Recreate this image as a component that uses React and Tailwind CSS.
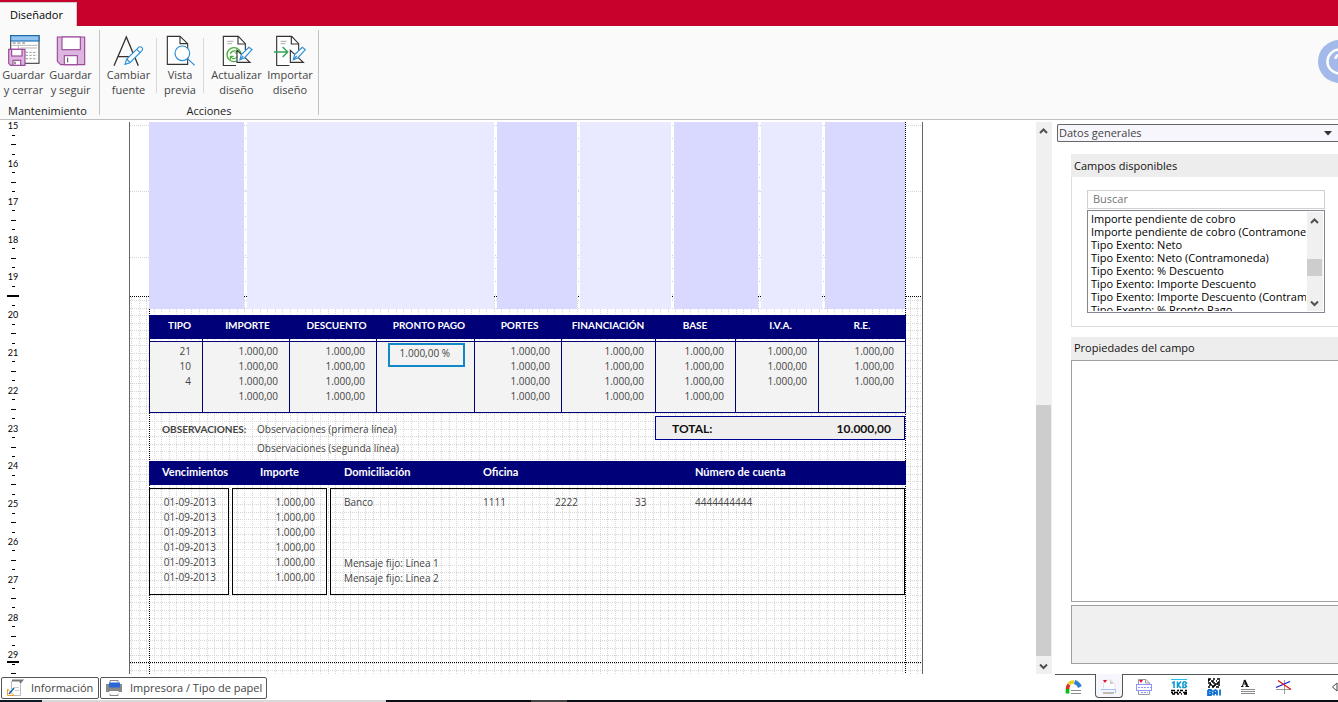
import React from "react";

const UI = "font-['Open_Sans','Noto_Sans',sans-serif]";
const DOC = "font-['Lato','Open_Sans',sans-serif]";
const DOC_BODY = "font-['Open_Sans','Noto_Sans',sans-serif]";

/* ---------- ribbon icons ---------- */

function RibbonIcon({ box, children }) {
  return (
    <svg viewBox={box} className="size-8 shrink-0" fill="none" strokeWidth="3.4" aria-hidden="true">
      {children}
    </svg>
  );
}

function Pencil({ x, y }) {
  return (
    <g transform={`translate(${x} ${y})`}>
      <path d="M0 0 L5 -16 L41 -51 Q46 -55 51 -50 Q55 -46 51 -41 L15 -5 Z" fill="#fafafa" stroke="#2b8fd6" />
      <path d="M35 -45 L46 -35 M5 -16 L15 -5" stroke="#2b8fd6" />
    </g>
  );
}

function PageWithSquare({ x, children }) {
  return (
    <g transform={`translate(${x} 0)`}>
      <path d="M38 197 H0 V109 H45 L66 131 V150" stroke="#333" fill="#fff" />
      <path d="M44 109 V132 H66" stroke="#333" />
      <path d="M12 124 H30 M12 131 H26" stroke="#999" strokeWidth="2.5" />
      {children}
      <path d="M41 151 V187 H80 Z" fill="#fff" stroke="#333" />
      <path d="M50 179 L54 164 L77 142 L86 149 L64 173 Z" fill="#fafafa" stroke="#2b8fd6" />
      <path d="M50 179 L60 168" stroke="#2b8fd6" />
    </g>
  );
}

const SaveCloseIcon = () => (
  <RibbonIcon box="23 102 96 96">
    <rect x="31" y="107" width="85" height="83" fill="#fff" stroke="#444" />
    <rect x="31" y="107" width="85" height="16" fill="#92c5f0" stroke="#1a6cae" />
    <path d="M37 129 H46 M51 129 H60 M65 129 H74" stroke="#777" />
    <path d="M33 136 H112 M54 136 V148 M60 144 H110" stroke="#aaa" strokeWidth="2.5" />
    <path d="M76 157 H110 M76 166 H110 M76 176 H110" stroke="#999" strokeWidth="3" strokeDasharray="7 4" />
    <path d="M25 148 H74 V196 H31 L25 190 Z" fill="#dcb6de" stroke="#9c489c" />
    <rect x="34" y="148" width="31" height="20" fill="#fff" stroke="#9c489c" />
    <rect x="38" y="181" width="23" height="15" fill="#fff" stroke="#9c489c" />
    <path d="M44 185 V193" stroke="#444" />
  </RibbonIcon>
);

const SaveIcon = () => (
  <RibbonIcon box="165 102 96 96">
    <path d="M172 111 H254 V194 H182 L172 184 Z" fill="#dcb6de" stroke="#9c489c" />
    <rect x="186" y="111" width="55" height="38" fill="#fff" stroke="#9c489c" />
    <rect x="193" y="167" width="39" height="27" fill="#fff" stroke="#9c489c" />
    <path d="M203 173 V187" stroke="#444" strokeWidth="3" />
  </RibbonIcon>
);

const FontIcon = () => (
  <RibbonIcon box="335 103 96 96">
    <path d="M338 198 L375 112 L411 198 M349 171 H398" stroke="#333" strokeWidth="4" />
    <Pencil x={371} y={194} />
  </RibbonIcon>
);

const PreviewIcon = () => (
  <RibbonIcon box="492 102 96 96">
    <path d="M502 109 H540 L563 131 V193 H502 Z" fill="#fff" stroke="#333" />
    <path d="M540 109 V131 H563" stroke="#333" />
    <circle cx="547" cy="160" r="22" fill="#fff" stroke="#2b8fd6" strokeWidth="3.6" />
    <path d="M563 176 L584 196" stroke="#2b8fd6" strokeWidth="3.6" />
  </RibbonIcon>
);

const RefreshIcon = () => (
  <RibbonIcon box="660 102 96 96">
    <PageWithSquare x={667}>
      <circle cx="32" cy="164" r="21" fill="#fff" stroke="#48ad3a" strokeWidth="4" />
      <path d="M21 161 Q26 150 38 153 L43 158 M44 150 V159 H34" stroke="#48ad3a" strokeWidth="3.6" />
      <path d="M43 168 Q38 178 27 175 L22 170 M21 179 V169 H31" stroke="#48ad3a" strokeWidth="3.6" />
    </PageWithSquare>
  </RibbonIcon>
);

const ImportIcon = () => (
  <RibbonIcon box="818 102 96 96">
    <PageWithSquare x={826}>
      <path d="M-8 156 H30 M18 141 L33 156 L18 171" stroke="#35a457" strokeWidth="4.5" />
    </PageWithSquare>
  </RibbonIcon>
);

function RibbonButton({ icon, lines, className }) {
  return (
    <button type="button" className={`flex flex-col items-center pt-2 text-[#444] ${className}`}>
      {icon}
      <span className="block pt-px text-[11px] leading-[15px] whitespace-nowrap">
        {lines[0]}
        <br />
        {lines[1]}
      </span>
    </button>
  );
}

function RibbonGroup({ title, className, children }) {
  return (
    <section className={`flex flex-col ${className}`}>
      <div className="flex pl-px">{children}</div>
      <h2 className="pt-[5px] text-center text-[11px] leading-[18px] text-[#222]">{title}</h2>
    </section>
  );
}

const Divider = () => <div className="mt-3 mb-1 w-px bg-[#d8d8d8]" />;

function Ribbon() {
  return (
    <div className="flex h-[94px] shrink-0 items-start overflow-hidden border-b border-[#c0c0c0] bg-[#fafafa]">
      <RibbonGroup title="Mantenimiento" className="w-[99px] pr-1">
        <RibbonButton icon={<SaveCloseIcon />} lines={["Guardar", "y cerrar"]} className="w-[46px]" />
        <RibbonButton icon={<SaveIcon />} lines={["Guardar", "y seguir"]} className="w-[50px]" />
      </RibbonGroup>
      <div className="mt-1 h-[85px] w-px bg-[#c4c4c4]" />
      <RibbonGroup title="Acciones" className="w-[218px]">
        <RibbonButton icon={<FontIcon />} lines={["Cambiar", "fuente"]} className="w-[55px]" />
        <Divider />
        <RibbonButton icon={<PreviewIcon />} lines={["Vista", "previa"]} className="w-[46px]" />
        <Divider />
        <RibbonButton icon={<RefreshIcon />} lines={["Actualizar", "diseño"]} className="w-[65px]" />
        <RibbonButton icon={<ImportIcon />} lines={["Importar", "diseño"]} className="w-[42px]" />
      </RibbonGroup>
      <div className="mt-1 h-[85px] w-px bg-[#c4c4c4]" />
      <button type="button" aria-label="Ayuda" className="mt-[14px] -mr-[23px] ml-auto shrink-0">
        <svg viewBox="0 0 43 43" className="size-[43px]" aria-hidden="true">
          <circle cx="21.5" cy="21.5" r="21.5" fill="#a3b9ea" />
          <circle cx="21.5" cy="21.5" r="12" fill="none" stroke="#fff" strokeWidth="2.5" />
          <path d="M17.5 19 Q17.5 15 21.5 15 Q25.5 15 25.5 18.5 Q25.5 21 21.5 23 V25 M21.5 27 V29" fill="none" stroke="#fff" strokeWidth="2.4" />
        </svg>
      </button>
    </div>
  );
}

/* ---------- ruler and page ---------- */

const CM = 37.8;
const STEP = CM / 5;

function Ruler() {
  const marks = Array.from({ length: 15 }, (_, i) => 15 + i);
  return (
    <div className="relative w-[26px] shrink-0">
      <div className="mt-px grid h-[567px] grid-rows-15">
        {marks.map((n) => (
          <div key={n} className="grid grid-rows-4 place-items-center">
            <span className={`h-[9px] text-[9px] leading-[9px] text-black ${DOC}`}>{n}</span>
            <i className="h-px w-[3px] bg-black" />
            <i className="h-px w-[5px] bg-black" />
            <i className="h-px w-[3px] bg-black" />
          </div>
        ))}
      </div>
      <i className="absolute top-[175px] left-[7px] h-[2px] w-3 bg-black" />
      <i className="absolute top-[541px] left-[7px] h-[2px] w-3 bg-black" />
    </div>
  );
}

function PageGrid() {
  const gaps = [115, 365, 448, 542, 629, 693];
  const rows = Array.from({ length: 50 }, (_, i) => Math.round(178 + i * STEP)).filter((y) => y < 553);
  const cols = Array.from({ length: 105 }, (_, i) => Math.round(1 + i * STEP));
  return (
    <svg className="absolute inset-0 size-full" shapeRendering="crispEdges" aria-hidden="true">
      <g stroke="#d6d6d6" strokeDasharray="1 1">
        {[3, 69, 135].map((y) => (
          <path key={y} d={`M0 ${y + 0.5} H792`} />
        ))}
        {rows.map((y) => (
          <path key={y} d={`M0 ${y + 0.5} H792`} />
        ))}
      </g>
      <g stroke="#d6d6d6" strokeDasharray="1 1">
        {cols.map((x) => (
          <path key={x} d={`M${x + 0.5} 175 V553`} />
        ))}
      </g>
      <g stroke="#c8c8c8" strokeDasharray="1 12">
        {gaps.map((x) => (
          <path key={x} d={`M${x + 0.5} 16 V174`} />
        ))}
      </g>
      <g stroke="#000" strokeDasharray="1 1">
        <path d="M0 174.5 H792 M0 540.5 H792 M19.5 187 V553 M775.5 0 V553" />
      </g>
    </svg>
  );
}

const bands = [
  "w-[95px] bg-[#d9d9ff]",
  "w-[247px] bg-[#e9e9ff]",
  "w-[80px] bg-[#d9d9ff]",
  "w-[91px] bg-[#e9e9ff]",
  "w-[84px] bg-[#d9d9ff]",
  "w-[61px] bg-[#e9e9ff]",
  "w-[80px] bg-[#d9d9ff]",
];

const N = "1.000,00";
const taxColumns = [
  { title: "TIPO", col: "w-[53px]", head: "pl-2", values: ["21", "10", "4", ""] },
  { title: "IMPORTE", col: "w-[87px]", head: "pl-1", values: [N, N, N, N] },
  { title: "DESCUENTO", col: "w-[87px]", head: "pl-2", values: [N, N, N, N] },
  { title: "PRONTO PAGO", col: "w-[98px]", head: "pl-2", values: ["*", "", "", ""] },
  { title: "PORTES", col: "w-[87px]", head: "pl-1", values: [N, N, N, N] },
  { title: "FINANCIACIÓN", col: "w-[94px]", head: "", values: [N, N, N, N] },
  { title: "BASE", col: "w-[80px]", head: "", values: [N, N, N, N] },
  { title: "I.V.A.", col: "w-[83px]", head: "pl-2", values: [N, N, N, ""] },
  { title: "R.E.", col: "w-[88px]", head: "", values: [N, N, N, ""] },
];

const rowStyle = ["border-t pt-[2px] h-[18px]", "h-[15px]", "h-[15px]", "border-b pb-[8px] h-[24px]"];

function TaxTable() {
  return (
    <table className="mt-[6px] w-[757px] table-fixed border-separate border-spacing-0 text-[10px] leading-[15px]">
      <colgroup>
        {taxColumns.map((c) => (
          <col key={c.title} className={c.col} />
        ))}
      </colgroup>
      <thead>
        <tr>
          {taxColumns.map((c) => (
            <th key={c.title} className={`h-6 bg-[#000078] p-0 pb-[3px] text-center font-bold whitespace-nowrap text-white ${c.head}`}>
              {c.title}
            </th>
          ))}
        </tr>
        <tr aria-hidden="true">
          {taxColumns.map((c) => (
            <td key={c.title} className="h-[2px] border-l border-[#000078] p-0 last:border-r" />
          ))}
        </tr>
      </thead>
      <tbody className={DOC_BODY}>
        {rowStyle.map((style, r) => (
          <tr key={r}>
            {taxColumns.map((c) => (
              <td
                key={c.title}
                className={`relative border-l border-[#000078] bg-[#f3f3f3] pr-[11px] text-right text-[#444] last:border-r ${style}`}
              >
                {c.values[r] === "*" ? (
                  <span className="absolute top-px left-[11px] z-10 h-6 w-[77px] border-2 border-[#1088c8] bg-[#f3f3f3] pr-[13px] leading-4 whitespace-nowrap">
                    1.000,00 %
                  </span>
                ) : (
                  c.values[r]
                )}
              </td>
            ))}
          </tr>
        ))}
      </tbody>
    </table>
  );
}

function Sheet() {
  return (
    <div className={`relative mt-[2px] ml-[103px] w-[794px] shrink-0 overflow-hidden border-x border-[#666] bg-white ${DOC}`}>
      <PageGrid />
      <div className="relative ml-[19px] w-[757px]">
        <div className="flex h-[187px] gap-[3px]">
          {bands.map((b, i) => (
            <div key={i} className={b} />
          ))}
        </div>
        <TaxTable />
        <div className="mt-[3px] flex h-[45px] items-start text-[10px] leading-[19px] text-[#444]">
          <strong className="w-[108px] pt-1 pl-[13px]">OBSERVACIONES:</strong>
          <div className={`pt-1 ${DOC_BODY}`}>
            <p>Observaciones (primera línea)</p>
            <p>Observaciones (segunda línea)</p>
          </div>
          <div className="mr-px ml-auto flex h-6 w-[250px] items-center justify-between border border-[#000090] bg-[#efefef] pr-[13px] pl-4 text-[12px] font-bold text-[#111]">
            <span>TOTAL:</span>
            <span>10.000,00</span>
          </div>
        </div>
        <div className="grid h-6 grid-cols-[98px_84px_139px_212px_1fr] bg-[#000078] pl-[13px] text-[11px] leading-[21px] font-bold text-white">
          <span>Vencimientos</span>
          <span>Importe</span>
          <span>Domiciliación</span>
          <span>Oficina</span>
          <span>Número de cuenta</span>
        </div>
        <div className={`mt-[3px] flex h-[107px] gap-[3px] text-[10px] leading-[15px] text-[#444] ${DOC_BODY}`}>
          <div className="w-[80px] border border-black pt-[6px] pr-[12px] text-right">
            {[0, 1, 2, 3, 4, 5].map((i) => (
              <p key={i}>01-09-2013</p>
            ))}
          </div>
          <div className="w-[95px] border border-black pt-[6px] pr-[11px] text-right">
            {[0, 1, 2, 3, 4, 5].map((i) => (
              <p key={i}>1.000,00</p>
            ))}
          </div>
          <div className="w-[575px] border border-black pt-[6px] pl-[13px]">
            <div className="grid h-[61px] grid-cols-[139px_72px_80px_60px_1fr]">
              <span>Banco</span>
              <span>1111</span>
              <span>2222</span>
              <span>33</span>
              <span>4444444444</span>
            </div>
            <p>Mensaje fijo: Línea 1</p>
            <p>Mensaje fijo: Línea 2</p>
          </div>
        </div>
      </div>
    </div>
  );
}

const Chevron = ({ up }) => (
  <svg viewBox="0 0 16 16" className="size-4" fill="none" stroke="#505050" strokeWidth="2" aria-hidden="true">
    <path d={up ? "M4 11 L7.5 7.5 L11 11" : "M4 6.5 L7.5 10 L11 6.5"} />
  </svg>
);

function CanvasScrollbar() {
  return (
    <div className="mt-[2px] ml-auto flex w-4 shrink-0 flex-col bg-[#f0f0f0]">
      <Chevron up />
      <div className="flex-[267]" />
      <div className="mr-px flex-[251] bg-[#cdcdcd]" />
      <div className="h-[2px]" />
      <Chevron />
    </div>
  );
}

/* ---------- right panel ---------- */

const fields = [
  "Importe pendiente de cobro",
  "Importe pendiente de cobro (Contramoneda)",
  "Tipo Exento: Neto",
  "Tipo Exento: Neto (Contramoneda)",
  "Tipo Exento: % Descuento",
  "Tipo Exento: Importe Descuento",
  "Tipo Exento: Importe Descuento (Contramoneda)",
  "Tipo Exento: % Pronto Pago",
];

function FieldPanel() {
  return (
    <aside className="flex w-[282px] shrink-0 flex-col pt-1">
      <div className="relative ml-px">
        <select
          aria-label="Categoría"
          className="block h-[18px] w-full appearance-none rounded-l-[2px] border border-r-0 border-[#666] bg-[#f8f6fd] pl-px text-[11px] leading-4 text-[#444]"
        >
          <option>Datos generales</option>
        </select>
        <svg viewBox="0 0 8 5" className="pointer-events-none absolute top-[7px] right-[6px] h-[5px] w-2" aria-hidden="true">
          <path d="M0 0 H8 L4 4.5 Z" fill="#333" />
        </svg>
      </div>
      <section className="mt-3 ml-[15px]">
        <h2 className="h-[23px] bg-[#ededed] pl-[3px] text-[11px] leading-[23px] text-[#111]">Campos disponibles</h2>
        <div className="h-[150px] border-b border-l border-[#ddd] pt-[13px] pl-[15px]">
          <input
            aria-label="Buscar"
            placeholder="Buscar"
            className="block h-[19px] w-[238px] border border-[#d0d0d0] bg-white px-[5px] pb-[2px] text-[11px] leading-[15px] placeholder:text-[#767676]"
          />
          <div className="mt-px flex h-[103px] w-[238px] border border-[#828790] bg-white p-px">
            <ul className="mr-px min-w-0 flex-1 overflow-hidden pl-[2px] text-[11px] leading-[13px] whitespace-nowrap text-black">
              {fields.map((f) => (
                <li key={f}>{f}</li>
              ))}
            </ul>
            <div className="flex w-4 shrink-0 flex-col bg-[#f0f0f0]">
              <Chevron up />
              <div className="flex-[31]" />
              <div className="mr-px h-[17px] bg-[#cdcdcd]" />
              <div className="flex-[19]" />
              <Chevron />
            </div>
          </div>
        </div>
      </section>
      <section className="mt-[10px] ml-[15px] flex flex-1 flex-col">
        <h2 className="h-[23px] bg-[#ededed] pl-[3px] text-[11px] leading-[22px] text-[#111]">Propiedades del campo</h2>
        <div className="flex-1 border border-r-0 border-[#a0a0a0] bg-white" />
        <div className="mt-[3px] mb-[10px] h-[59px] border border-r-0 border-[#a0a0a0] bg-[#f0f0f0]" />
      </section>
    </aside>
  );
}

/* ---------- bottom bars ---------- */

function TabIcon({ children }) {
  return (
    <svg viewBox="0 0 18 18" className="size-[18px] shrink-0" fill="none" aria-hidden="true">
      {children}
    </svg>
  );
}

const tools = [
  {
    name: "Imagen",
    icon: (
      <TabIcon>
        <path d="M2.5 15.5 V11" stroke="#00c010" strokeWidth="3.6" />
        <path d="M2.5 11 Q2.5 8.5 4 6.5" stroke="#e03020" strokeWidth="3.6" />
        <path d="M4 6 Q5.5 4 9 4" stroke="#e8d020" strokeWidth="3.6" />
        <path d="M9.5 4 Q13 5 15 9" stroke="#3080d0" strokeWidth="4" />
        <path d="M6 12.5 H16 M6 15.5 H16" stroke="#888" />
      </TabIcon>
    ),
  },
  {
    name: "Campo",
    icon: (
      <TabIcon>
        <path d="M3.5 11 V3 H11 L15 7 V13" stroke="#e4e4e4" fill="#fff" />
        <path d="M10 3 L14 7 H10 Z" fill="#ccc" />
        <path d="M3 3 H7 L5 6 Z" fill="#e01030" />
        <path d="M1 12.5 H15.5 V16" stroke="#9cc4f0" />
        <path d="M3 16 H14" stroke="#bbb" strokeWidth="2" />
      </TabIcon>
    ),
  },
  {
    name: "Impresión",
    icon: (
      <TabIcon>
        <path d="M3.5 6 V1.5 H11 L14.5 5 V6 M3.5 11 V16.5 H14.5 V11" stroke="#999" fill="#fff" />
        <path d="M10.5 2 V5 H14" stroke="#999" />
        <path d="M4 2 H8 L6 5 Z" fill="#e01030" />
        <rect x="1.5" y="6.5" width="15" height="6" fill="#fff" stroke="#9494ff" />
        <path d="M3 9.5 H16 M6 14.5 H13" stroke="#9494ff" strokeDasharray="2 1" />
      </TabIcon>
    ),
  },
  {
    name: "Código de barras",
    icon: (
      <TabIcon>
        <path d="M1 1.5 H17" stroke="#20c0f0" />
        <path d="M2 5 L4 4 V10 M7.5 3.5 V10 M11 3.5 L8 7 L11 10 M13 4 V9.5 H15.5 L16.5 8.5 L15 6.8 L16.5 5 L15.5 4 H13" stroke="#109cd0" strokeWidth="1.6" />
        <path d="M1 12.5 H5 M7 12.5 H9 M10 12.5 H13 M15 12.5 H17 M1 14.5 H3 M4 14.5 H8 M9 14.5 H11 M13 14.5 H17 M2 16 H5 M7 16 H9 M11 16 H12 M14 16 H17" stroke="#000" strokeWidth="1.6" />
      </TabIcon>
    ),
  },
  {
    name: "BIDI",
    icon: (
      <TabIcon>
        <path d="M3 1 H6 M8 1 H10 M12 1 H15 M3 3 H4 M6 3 H9 M11 3 H12 M14 3 H15 M3 5 H6 M8 5 H10 M12 5 H15 M4 7 H7 M9 7 H11 M13 7 H15 M3 9 H5 M7 9 H9 M11 9 H14 M3 2 H5 M7 4 H8 M13 4 H14 M5 6 H6 M10 6 H13 M7 8 H10" stroke="#000" strokeWidth="1.5" />
        <path d="M3 12 V17 H6 L7 16 L6 14.5 L7 13 L6 12 H3 M3 14.5 H6 M9 17.5 V13 L10.5 12 L12 13 V17.5 M9 15 H12 M15 11.5 V17.5" stroke="#1070d0" strokeWidth="1.8" />
      </TabIcon>
    ),
  },
  {
    name: "Texto",
    icon: (
      <TabIcon>
        <path d="M1 8.5 H3.5 M5.5 8.5 H9 M2.5 8 L4.5 2 M3.5 6 H6.5" stroke="#111" />
        <path d="M4.5 2 L7.2 8" stroke="#111" strokeWidth="2" />
        <path d="M1 11.5 H15 M1 13.5 H15 M1 15.5 H15" stroke="#888" />
      </TabIcon>
    ),
  },
  {
    name: "Líneas",
    icon: (
      <TabIcon>
        <path d="M9.5 2 V16 M1 11.5 H16" stroke="#999" />
        <path d="M1 9.5 L15 3.5" stroke="#1515e0" strokeWidth="1.3" />
        <path d="M3 2.5 L16 11.5" stroke="#e01515" strokeWidth="1.3" />
      </TabIcon>
    ),
  },
];

const plainTool = "flex h-6 w-[35px] items-center justify-center border-t border-[#555] pt-px";
const toolStyle = [
  "flex h-6 w-10 items-center justify-center border-t border-[#555] pr-[3px] pt-px",
  "flex h-6 w-7 items-center justify-center rounded-b-[4px] border border-t-0 border-[#555] bg-[#f8f6fd]",
  "flex h-6 w-[38px] items-center justify-center border-t border-[#555] pl-[3px] pt-px",
  plainTool,
  plainTool,
  plainTool,
  plainTool,
];

function BottomBar() {
  const tab =
    "flex h-[22px] shrink-0 items-center rounded-[2px] border border-[#555] bg-white text-[11px] whitespace-nowrap text-[#444]";
  return (
    <div className="flex h-[26px] shrink-0 justify-between">
      <div className="flex gap-px pt-[3px] pl-px">
        <button type="button" className={`w-[98px] gap-[7px] pl-1 ${tab}`}>
          <TabIcon>
            <path d="M6 1.5 H16 L14 4" stroke="#777" strokeWidth="2" />
            <path d="M5.5 2 V10 M14.5 4 V16.5 H8" stroke="#bbb" />
            <path d="M8 8.5 H13 M9 11.5 H13" stroke="#ccc" />
            <path d="M1.5 10 V16.5 H8 Z" fill="#fff" stroke="#e8a030" />
            <path d="M3 15 L8 9" stroke="#2060a8" strokeWidth="1.6" />
          </TabIcon>
          Información
        </button>
        <button type="button" className={`w-[167px] gap-[7px] pl-1 ${tab}`}>
          <TabIcon>
            <path d="M5 3.5 V1.5 H13 V3.5 M5 14 V16.5 H13 V14" stroke="#888" />
            <rect x="1" y="5" width="16" height="8" fill="#888" />
            <rect x="4" y="3.5" width="11" height="5" fill="#2868d8" />
            <rect x="4.5" y="12" width="9" height="3" fill="#fff" />
          </TabIcon>
          Impresora / Tipo de papel
        </button>
      </div>
      <div className="flex w-[283px] items-start">
        {tools.map((t, i) => (
          <button key={t.name} type="button" aria-label={t.name} className={toolStyle[i]}>
            {t.icon}
          </button>
        ))}
        <div className="flex h-6 flex-1 items-center justify-end border-t border-[#555]">
          <button type="button" aria-label="Anterior">
            <svg viewBox="0 0 7 10" className="h-[10px] w-[7px]" fill="none" stroke="#444" aria-hidden="true">
              <path d="M6 1 L1.5 5 L6 9 Z" />
            </svg>
          </button>
        </div>
      </div>
    </div>
  );
}

export default function App() {
  return (
    <div className={`flex h-screen flex-col overflow-hidden bg-white ${UI}`}>
      <header className="flex h-[26px] shrink-0 items-end bg-[#c8002c]">
        <button type="button" className="h-6 w-[77px] border-t border-r border-[#ccc] bg-[#fafafa] pt-[2px] pr-[3px] text-[11px] text-black">
          Diseñador
        </button>
      </header>
      <Ribbon />
      <main className="flex min-h-0 flex-1">
        <div className="flex min-w-0 flex-1 overflow-hidden">
          <Ruler />
          <Sheet />
          <CanvasScrollbar />
        </div>
        <div className="w-1 shrink-0" />
        <FieldPanel />
      </main>
      <BottomBar />
      <div className="flex h-[2px] shrink-0">
        <div className="w-[42px] bg-[#0a1a26]" />
        <div className="w-[344px] bg-[#d8d8d8]" />
        <div className="w-[145px] bg-[#0a0f16]" />
        <div className="w-[36px] bg-[#444]" />
        <div className="flex-1 bg-[#0a0f16]" />
      </div>
    </div>
  );
}
